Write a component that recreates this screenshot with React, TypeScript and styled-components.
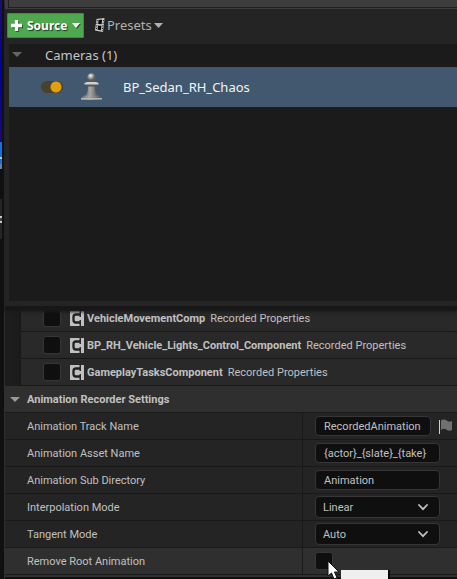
import React from 'react';
import styled, { createGlobalStyle } from 'styled-components';

const GlobalStyle = createGlobalStyle`
  * { box-sizing: border-box; }
  body { margin: 0; background: #101010; font-family: Roboto, sans-serif; font-size: 11px; color: #c0c0c0; overflow-x: hidden; }
  button, input, select { font: inherit; color: inherit; margin: 0; }
`;

const Shell = styled.div`
  display: flex;
  min-height: 100vh;
  overflow: hidden;
`;

const Backdrop = styled.div`
  display: flex;
  flex-direction: column;
  flex: 0 0 5px;
  border-right: 1px solid #303030;
`;

const Band = styled.div<{ $h: number; $fill: string }>`
  flex: 0 0 ${p => p.$h}px;
  width: 2px;
  background: ${p => p.$fill};
`;

const Main = styled.main`
  flex: 1;
  min-width: 0;
`;

const Sources = styled.section`
  position: relative;
  z-index: 1;
  background: #242424;
  padding-bottom: 5px;
  box-shadow: 0 4px 1px #171717, 0 6px 3px #1b1b1b;
`;

const TopStrip = styled.div`
  height: 9px;
  padding-left: 3px;
  background: #3d3d3d;
  &::before {
    content: '';
    display: block;
    height: 7px;
    border: solid #202020;
    border-width: 0 0 1px 1px;
  }
`;

const Toolbar = styled.div`
  display: flex;
  align-items: center;
  gap: 10px;
  height: 35px;
  padding: 0 2px 3px;
  font-family: 'Noto Sans', sans-serif;
`;

const SourceButton = styled.button`
  display: flex;
  align-items: center;
  gap: 5px;
  height: 25px;
  width: 77px;
  padding: 0 3px;
  border: 1px solid #3d8f40;
  border-radius: 1px;
  background: #4fa850;
  color: #fff;
  font-size: 12px;
  font-weight: 700;
  text-shadow: 1px 1px 1px #1b3b1c;
  svg { filter: drop-shadow(1px 1px 0 #24572a); flex: none; }
`;

const PresetsButton = styled.button`
  display: flex;
  align-items: center;
  gap: 2px;
  height: 25px;
  padding: 0;
  border: 0;
  background: none;
  color: #b0b0b0;
  font-size: 13px;
`;

const List = styled.div`
  min-height: 257px;
  margin-left: 4px;
  background: #1b1b1b;
  color: #c4c4c4;
  font-family: 'Noto Sans', sans-serif;
  font-size: 13px;
`;

const GroupHeader = styled.button`
  display: flex;
  align-items: center;
  gap: 23px;
  width: 100%;
  height: 23px;
  padding: 0 3px 2px;
  border: 0;
  background: none;
`;

const SourceRow = styled.div`
  display: flex;
  align-items: center;
  height: 40px;
  padding: 0 0 1px 32px;
  background: #42586f;
  color: #f2f4f6;
  svg { margin: 0 21px 0 18px; }
`;

const Toggle = styled.input`
  appearance: none;
  width: 22px;
  height: 12px;
  border-radius: 6px;
  background: radial-gradient(circle at 15px 6px, #e0a00c 5px, transparent 6px), #4a402e;
`;

const Details = styled.section`
  background: #242424;
  border-bottom: 2px solid #303030;
`;

const ComponentRow = styled.label`
  display: flex;
  align-items: center;
  height: 27px;
  margin-left: 16px;
  padding-left: 22px;
  border-bottom: 1px solid #191919;
  background: #292929;
  box-shadow: -4px 0 4px -2px #191919, -16px 1px 0 #1d1d1d;
  white-space: nowrap;
  svg { margin: 0 3px 0 9px; flex: none; }
  b { font-weight: 700; margin-right: 5px; }
`;

const Components = styled.div`
  margin-top: -1px;
`;

const CheckBox = styled.input`
  appearance: none;
  flex: none;
  width: 18px;
  height: 18px;
  border: 1px solid #363636;
  border-radius: 3px;
  background: #0f0f0f;
`;

const SectionHeader = styled.button`
  display: flex;
  align-items: center;
  gap: 7px;
  width: 100%;
  height: 27px;
  padding: 0 5px;
  border: 0;
  border-bottom: 1px solid #191919;
  background: #2f2f2f;
  font-weight: 700;
`;

const PropertyRow = styled.div<{ $hover?: boolean }>`
  display: grid;
  grid-template-columns: minmax(0, 298fr) minmax(0, 154fr);
  height: 27px;
  border-bottom: 1px solid #191919;
  background: ${p => (p.$hover ? '#2f2f2f' : '#242424')};
`;

const Name = styled.label`
  display: flex;
  align-items: center;
  padding-left: 22px;
  border-right: 1px solid #191919;
`;

const Value = styled.div`
  position: relative;
  display: flex;
  align-items: center;
  gap: 8px;
  padding: 0 17px 0 12px;
`;

const FlaggedValue = styled(Value)`
  padding-right: 4px;
  svg { flex: none; }
`;

const TextBox = styled.input`
  flex: 1;
  min-width: 0;
  height: 20px;
  padding: 0 7px 0 8px;
  border: 1px solid #363636;
  border-radius: 4px;
  background: #0f0f0f;
`;

const SelectBox = styled.div`
  position: relative;
  flex: 1;
  svg { position: absolute; right: 12px; top: 8px; pointer-events: none; }
`;

const Select = styled.select`
  appearance: none;
  display: block;
  width: 100%;
  height: 22px;
  padding: 0 7px;
  border: 1px solid #363636;
  border-radius: 4px;
  background: #0f0f0f;
`;

const Pointer = styled.svg`
  position: absolute;
  left: 24px;
  top: 12px;
  z-index: 3;
`;

const Tooltip = styled.div`
  position: absolute;
  left: 38px;
  top: 22px;
  z-index: 2;
  width: 49px;
  height: 20px;
  border: solid #080808;
  border-width: 0 2px 0 0;
  background: #efefef;
`;

const Caret = ({ width = 9, color = '#b0b0b0' }: { width?: number; color?: string }) => (
  <svg width={width} height="5" viewBox="0 0 10 6" preserveAspectRatio="none"><path d="M0 0H10L5 6Z" fill={color} /></svg>
);

const Plus = () => (
  <svg width="11" height="11" viewBox="0 0 10 10"><path d="M3.5 0h3v3.500H10v3H6.500V10h-3V6.500H0v-3h3.500Z" fill="#fff" /></svg>
);

const FilmIcon = () => (
  <svg width="11" height="16" viewBox="0 0 11 16">
    <path d="M2.500 2L10.500 1L9 15L1 13.500Z" fill="#d0d0d0" />
    <path d="M4.500 3L8 2.500L7.700 7.300L4.200 7ZM4 8.500L7.500 8.800L7 13.300L3.500 12.700Z" fill="#080808" />
    <path d="M3.300 3L2.300 12.700M9.400 3L8.300 14" stroke="#181818" strokeWidth="1" strokeDasharray="1.300 1.300" />
  </svg>
);

const PawnIcon = () => (
  <svg width="21" height="28" viewBox="0 0 21 28">
    <defs>
      <linearGradient id="metal"><stop offset="0" stopColor="#686868" /><stop offset=".4" stopColor="#a8a8a8" /><stop offset="1" stopColor="#505050" /></linearGradient>
      <radialGradient id="ball" cx=".4" cy=".3"><stop offset="0" stopColor="#f2f2f2" /><stop offset="1" stopColor="#5c5c5c" /></radialGradient>
    </defs>
    <path d="M7 12H14Q13.500 20 17 23H4Q7.500 20 7 12Z" fill="url(#metal)" />
    <path d="M3.500 10H17.500V11.500L14.500 13.500H6.500L3.500 11.500Z" fill="#555" />
    <path d="M3.500 10L6 9H15L17.500 10V11.500H3.500Z" fill="#d2d2d2" />
    <circle cx="10.500" cy="4.500" r="4.200" fill="url(#ball)" />
    <path d="M3 22.500H18L21 25V27H0V25Z" fill="url(#metal)" />
    <path d="M0 25H21V26.500H0Z" fill="#b4b4b4" />
  </svg>
);

const ComponentIcon = () => (
  <svg width="14" height="15" viewBox="0 0 14 15">
    <path d="M0 0H9.500V15H0Z" fill="#c0c0c0" />
    <path d="M10 3.500H6Q3.500 3.500 3.500 6V9Q3.500 11.500 6 11.500H10" fill="none" stroke="#202020" strokeWidth="2.300" />
    <path d="M7 6H11V0H14V15H11V9H7Z" fill="#c0c0c0" />
  </svg>
);

const FlagIcon = () => (
  <svg width="14" height="15" viewBox="0 0 14 15">
    <path d="M.5 1V15" stroke="#d0d0d0" />
    <path d="M2 1.500Q5-.5 7.500 1.500T13 2V11Q10 12.500 7.500 10.700T2 11Z" fill="#707070" />
  </svg>
);

const Chevron = () => (
  <svg width="10" height="7" viewBox="0 0 10 7"><path d="M1 1L5 5.200L9 1" fill="none" stroke="#c0c0c0" strokeWidth="1.800" strokeLinecap="round" /></svg>
);

const components = ['VehicleMovementComp', 'BP_RH_Vehicle_Lights_Control_Component', 'GameplayTasksComponent'];

function SelectRow({ id, label, options }: { id: string; label: string; options: string[] }) {
  return (
    <PropertyRow>
      <Name htmlFor={id}>{label}</Name>
      <Value>
        <SelectBox>
          <Select id={id}>{options.map(o => <option key={o}>{o}</option>)}</Select>
          <Chevron />
        </SelectBox>
      </Value>
    </PropertyRow>
  );
}

export default function App() {
  return (
    <>
      <GlobalStyle />
      <Shell>
        <Backdrop>
          <Band $h={142} $fill="linear-gradient(#1c1070, #0000a0 50%, #1c0a70)" />
          <Band $h={15} $fill="#1673dd" />
          <Band $h={2} $fill="#b8c8e0" />
          <Band $h={5} $fill="#1673dd" />
          <Band $h={5} $fill="#6680a0" />
          <Band $h={30} $fill="#101010" />
          <Band $h={17} $fill="#262626" />
          <Band $h={7} $fill="linear-gradient(#c8c8c8 2px, #444 2px 5px, #c8c8c8 5px)" />
          <Band $h={16} $fill="#262626" />
        </Backdrop>
        <Main>
          <Sources>
            <TopStrip />
            <Toolbar>
              <SourceButton><Plus />Source<Caret width={8} color="#fff" /></SourceButton>
              <PresetsButton><FilmIcon />Presets<Caret /></PresetsButton>
            </Toolbar>
            <List>
              <GroupHeader><Caret width={10} color="#666" />Cameras (1)</GroupHeader>
              <SourceRow>
                <Toggle type="checkbox" role="switch" defaultChecked aria-label="BP_Sedan_RH_Chaos" />
                <PawnIcon />
                BP_Sedan_RH_Chaos
              </SourceRow>
            </List>
          </Sources>
          <Details>
            <Components>
              {components.map(name => (
                <ComponentRow key={name}>
                  <CheckBox type="checkbox" />
                  <ComponentIcon />
                  <b>{name}</b>Recorded Properties
                </ComponentRow>
              ))}
            </Components>
            <SectionHeader><Caret width={10} color="#999" />Animation Recorder Settings</SectionHeader>
            <PropertyRow>
              <Name htmlFor="track">Animation Track Name</Name>
              <FlaggedValue>
                <TextBox id="track" defaultValue="RecordedAnimation" />
                <FlagIcon />
              </FlaggedValue>
            </PropertyRow>
            <PropertyRow>
              <Name htmlFor="asset">Animation Asset Name</Name>
              <Value><TextBox id="asset" defaultValue="{actor}_{slate}_{take}" /></Value>
            </PropertyRow>
            <PropertyRow>
              <Name htmlFor="directory">Animation Sub Directory</Name>
              <Value><TextBox id="directory" defaultValue="Animation" /></Value>
            </PropertyRow>
            <SelectRow id="interpolation" label="Interpolation Mode" options={['Linear', 'Cubic', 'Constant']} />
            <SelectRow id="tangent" label="Tangent Mode" options={['Auto', 'User', 'Break']} />
            <PropertyRow $hover>
              <Name htmlFor="root">Remove Root Animation</Name>
              <Value>
                <CheckBox id="root" type="checkbox" />
                <Tooltip role="tooltip" />
                <Pointer width="14" height="20" viewBox="0 0 14 20">
                  <path d="M1 1V16L4.500 13L7 19L10 17.700L7.500 12H12Z" fill="#fff" stroke="#111" />
                </Pointer>
              </Value>
            </PropertyRow>
          </Details>
        </Main>
      </Shell>
    </>
  );
}
